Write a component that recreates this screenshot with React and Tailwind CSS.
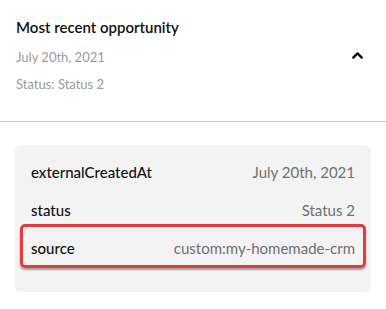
import { ChevronUp } from 'lucide-react';

const rows = [
    { label: 'externalCreatedAt', value: 'July 20th, 2021' },
    { label: 'status', value: 'Status 2' },
    { label: 'source', value: 'custom:my-homemade-crm', highlight: true },
];

const App = () => {
    return (
        <div className="w-[386px] h-[309px] bg-white font-['Lato',sans-serif] overflow-hidden">
            {/* Header */}
            <div className="flex items-center justify-between pl-4 pr-[20px] pt-[17px] pb-[27px] border-b border-[#cccccc]">
                <div className="flex flex-col">
                    <h2 className="text-[15px] leading-5 font-semibold text-[#111111]">Most recent opportunity</h2>
                    <p className="mt-[10px] text-[13px] leading-5 text-[#9a9a9a]">July 20th, 2021</p>
                    <p className="mt-[7px] text-[13px] leading-5 text-[#9a9a9a]">Status: Status 2</p>
                </div>
                <ChevronUp size={17} strokeWidth={3.2} className="text-black" />
            </div>

            {/* Details */}
            <div className="mx-[15px] mt-[23px] bg-[#f3f3f3] rounded-md px-4 pt-2 pb-[25px]">
                {rows.map((row) => (
                    <div key={row.label} className="relative flex items-center justify-between h-[38px]">
                        {row.highlight && (
                            <span className="absolute left-[-11px] right-[-11px] top-[-5px] bottom-[-1px] border-[3px] border-[#e8393f] rounded-[5px] shadow-[0_2px_2px_rgba(0,0,0,0.35)]"></span>
                        )}
                        <span className="text-[15px] font-medium text-[#111111]">{row.label}</span>
                        <span className="text-[15px] text-[#707070]">{row.value}</span>
                    </div>
                ))}
            </div>
        </div>
    );
};

export default App;
